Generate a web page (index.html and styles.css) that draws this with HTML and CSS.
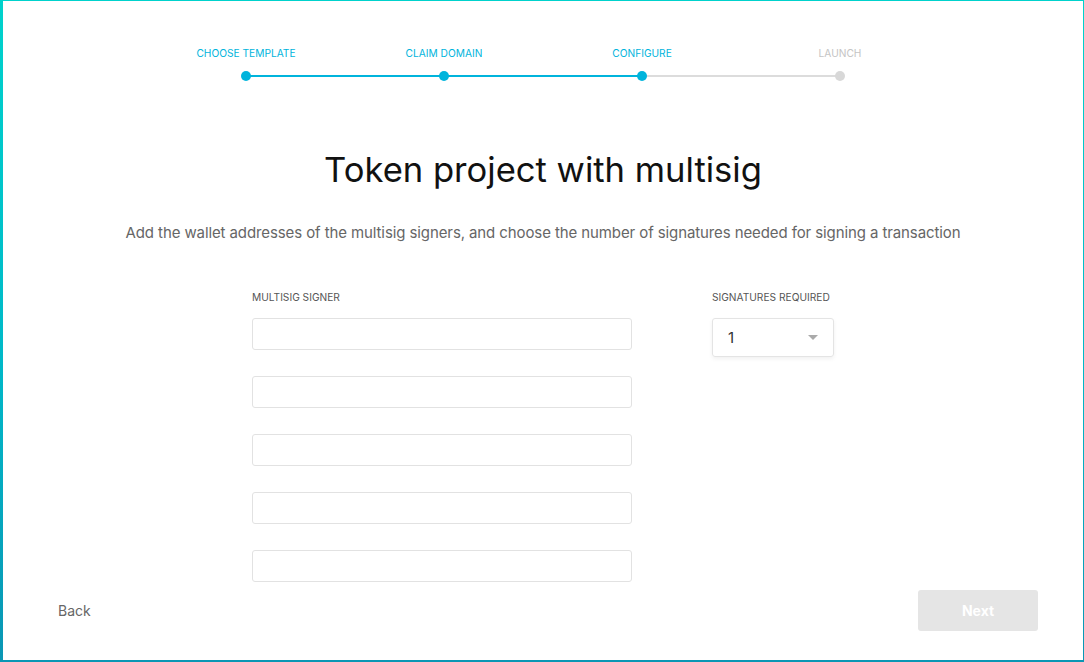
FILE: index.html
```html
<!DOCTYPE html>
<html lang="en">
<head>
<meta charset="utf-8">
<title>Token project with multisig</title>
<link rel="stylesheet" href="styles.css">
</head>
<body>
  <div class="frame">
    <ol class="stepper">
      <li class="step done"><span class="step-label">Choose template</span><span class="dot"></span></li>
      <li class="step done"><span class="step-label">Claim domain</span><span class="dot"></span></li>
      <li class="step current"><span class="step-label">Configure</span><span class="dot"></span></li>
      <li class="step"><span class="step-label">Launch</span><span class="dot"></span></li>
    </ol>

    <main class="content">
      <h1 class="title">Token project with multisig</h1>
      <p class="lead">Add the wallet addresses of the multisig signers, and choose the number of signatures needed for signing a transaction</p>

      <div class="form">
        <div class="signers">
          <div class="field-label">Multisig signer</div>
          <input class="text-input" type="text">
          <input class="text-input" type="text">
          <input class="text-input" type="text">
          <input class="text-input" type="text">
          <input class="text-input" type="text">
        </div>
        <div class="required">
          <div class="field-label">Signatures required</div>
          <div class="dropdown">
            <span class="dropdown-value">1</span>
            <span class="caret"></span>
          </div>
        </div>
      </div>
    </main>

    <footer class="footer">
      <button class="back" type="button">Back</button>
      <button class="next" type="button" disabled>Next</button>
    </footer>
  </div>
</body>
</html>
```

FILE: styles.css
```css
* {
  box-sizing: border-box;
}

html, body {
  margin: 0;
  height: 100%;
}

body {
  font-family: Inter, "Open Sans", "Liberation Sans", sans-serif;
  color: #222;
  background: #fff;
}

.frame {
  height: 100%;
  display: flex;
  flex-direction: column;
  border-style: solid;
  border-width: 1px 1px 2px 3px;
  border-image: linear-gradient(180deg, #00d2cc 0%, #00b8c8 55%, #0a96b4 100%) 1;
}

/* progress stepper */
.stepper {
  list-style: none;
  margin: 45px auto 0;
  padding: 0;
  display: grid;
  grid-template-columns: repeat(4, 198px);
}

.step {
  position: relative;
  display: flex;
  flex-direction: column;
  align-items: center;
  gap: 11px;
}

.step-label {
  font-size: 10.2px;
  line-height: 14px;
  text-transform: uppercase;
  color: #00b4dc;
  white-space: nowrap;
}

.step:last-child .step-label {
  color: #c4c4c4;
}

.dot {
  position: relative;
  z-index: 1;
  width: 10px;
  height: 10px;
  border-radius: 50%;
  background: #00b4dc;
}

.step:last-child .dot {
  background: #d8d8d8;
}

.step:not(:last-child)::after {
  content: "";
  position: absolute;
  left: 50%;
  width: 100%;
  bottom: 4px;
  height: 2px;
  background: #00b4dc;
}

.step.current::after {
  background: #dcdcdc !important;
}

/* main content */
.content {
  display: flex;
  flex-direction: column;
  align-items: center;
}

.title {
  margin: 66px 0 0;
  font-size: 34.6px;
  line-height: 44px;
  font-weight: 400;
  color: #111;
}

.lead {
  margin: 32px 0 0;
  font-size: 15px;
  line-height: 20px;
  letter-spacing: -0.1px;
  color: #666;
}

.form {
  margin-top: 47px;
  display: flex;
  gap: 80px;
}

.signers {
  width: 380px;
  display: flex;
  flex-direction: column;
  gap: 26px;
}

.signers .field-label {
  margin-bottom: -12px;
}

.field-label {
  font-size: 10.2px;
  line-height: 14px;
  text-transform: uppercase;
  color: #555;
  white-space: nowrap;
}

.text-input {
  display: block;
  width: 100%;
  height: 32px;
  margin: 0;
  border: 1px solid #e2e2e2;
  border-radius: 3px;
  background: #fff;
  font: inherit;
}

.required {
  width: 122px;
}

.required .field-label {
  margin-bottom: 14px;
}

.dropdown {
  height: 39px;
  display: flex;
  align-items: center;
  justify-content: space-between;
  padding: 0 15px 0 15px;
  border: 1px solid #e4e4e4;
  border-radius: 3px;
  box-shadow: 0 2px 4px rgba(0, 0, 0, 0.06);
  font-size: 15px;
  color: #333;
}

.caret {
  width: 0;
  height: 0;
  border-left: 5px solid transparent;
  border-right: 5px solid transparent;
  border-top: 5px solid #aaa;
}

/* footer navigation */
.footer {
  margin-top: auto;
  padding: 0 45px 29px 55px;
  display: flex;
  align-items: center;
  justify-content: space-between;
}

.back {
  border: 0;
  background: none;
  padding: 0;
  font: inherit;
  font-size: 14px;
  color: #666;
}

.next {
  width: 120px;
  height: 41px;
  border: 0;
  border-radius: 3px;
  background: #e5e5e5;
  color: #fff;
  font: inherit;
  font-size: 14px;
  font-weight: 700;
}
```
